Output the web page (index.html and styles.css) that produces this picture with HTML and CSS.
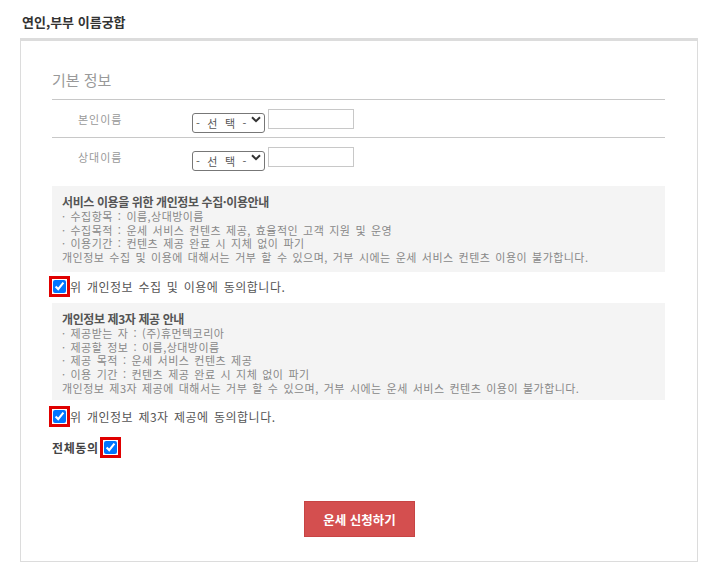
FILE: index.html
```html
<!DOCTYPE html>
<html lang="ko">
<head>
<meta charset="utf-8">
<title>연인,부부 이름궁합</title>
<link rel="stylesheet" href="styles.css">
</head>
<body>
<h1 class="page-title">연인,부부 이름궁합</h1>
<div class="panel">
  <div class="panel-inner">
    <h2 class="section-title">기본 정보</h2>
    <div class="form-row bordered">
      <span class="row-label">본인이름</span>
      <span class="select-wrap">
        <select class="sel"><option>- 선 택 -</option></select>
        <svg class="chev" width="10" height="7" viewBox="0 0 10 7"><path d="M1 1.2 L5 5.2 L9 1.2" fill="none" stroke="#333" stroke-width="2"/></svg>
      </span>
      <input class="name-input" type="text">
    </div>
    <div class="form-row">
      <span class="row-label">상대이름</span>
      <span class="select-wrap">
        <select class="sel"><option>- 선 택 -</option></select>
        <svg class="chev" width="10" height="7" viewBox="0 0 10 7"><path d="M1 1.2 L5 5.2 L9 1.2" fill="none" stroke="#333" stroke-width="2"/></svg>
      </span>
      <input class="name-input" type="text">
    </div>

    <div class="notice first">
      <p class="notice-title">서비스 이용을 위한 개인정보 수집·이용안내</p>
      <p class="notice-line">· 수집항목 : 이름,상대방이름</p>
      <p class="notice-line">· 수집목적 : 운세 서비스 컨텐츠 제공, 효율적인 고객 지원 및 운영</p>
      <p class="notice-line">· 이용기간 : 컨텐츠 제공 완료 시 지체 없이 파기</p>
      <p class="notice-line">개인정보 수집 및 이용에 대해서는 거부 할 수 있으며, 거부 시에는 운세 서비스 컨텐츠 이용이 불가합니다.</p>
    </div>
    <label class="agree-row">
      <span class="check-frame"><input type="checkbox" checked></span>
      <span class="agree-text">위 개인정보 수집 및 이용에 동의합니다.</span>
    </label>

    <div class="notice second">
      <p class="notice-title">개인정보 제3자 제공 안내</p>
      <p class="notice-line">· 제공받는 자 : (주)휴먼텍코리아</p>
      <p class="notice-line">· 제공할 정보 : 이름,상대방이름</p>
      <p class="notice-line">· 제공 목적 : 운세 서비스 컨텐츠 제공</p>
      <p class="notice-line">· 이용 기간 : 컨텐츠 제공 완료 시 지체 없이 파기</p>
      <p class="notice-line">개인정보 제3자 제공에 대해서는 거부 할 수 있으며, 거부 시에는 운세 서비스 컨텐츠 이용이 불가합니다.</p>
    </div>
    <label class="agree-row second-agree">
      <span class="check-frame"><input type="checkbox" checked></span>
      <span class="agree-text">위 개인정보 제3자 제공에 동의합니다.</span>
    </label>

    <label class="all-row">
      <span class="all-text">전체동의</span>
      <span class="check-frame"><input type="checkbox" checked></span>
    </label>

    <div class="btn-row">
      <button class="submit-btn" type="button">운세 신청하기</button>
    </div>
  </div>
</div>
</body>
</html>
```

FILE: styles.css
```css
* { box-sizing: border-box; }
html, body { margin: 0; padding: 0; background: #fff; }
body {
  font-family: "Noto Sans CJK KR", "Noto Sans", "Liberation Sans", sans-serif;
  color: #555;
  width: 716px;
}
.page-title {
  margin: 0;
  padding: 14px 0 0 22px;
  height: 38px;
  font-size: 13px;
  line-height: 16px;
  font-weight: 700;
  color: #333;
}
.panel {
  margin-left: 20px;
  width: 678px;
  height: 524px;
  border: 1px solid #dcdcdc;
  border-top: 3px solid #dcdcdc;
}
.panel-inner {
  padding: 29px 32px 0 31px;
}
.section-title {
  margin: 0;
  font-size: 15px;
  line-height: 20px;
  font-weight: 400;
  color: #999;
  padding-bottom: 9px;
  border-bottom: 1px solid #c8c8c8;
}
.form-row {
  display: flex;
  align-items: center;
  height: 38px;
}
.form-row.bordered { border-bottom: 1px solid #c8c8c8; }
.row-label {
  width: 140px;
  padding-left: 26px;
  font-size: 11px;
  letter-spacing: 1px;
  color: #999;
}
.select-wrap {
  position: relative;
  display: inline-block;
  width: 73px;
  height: 20px;
}
.sel {
  appearance: none;
  -webkit-appearance: none;
  width: 73px;
  height: 20px;
  margin: 0;
  padding: 0 0 0 3px;
  border: 1px solid #777;
  border-radius: 3px;
  background: #fff;
  font-family: inherit;
  font-size: 11px;
  letter-spacing: 2.2px;
  color: #555;
  line-height: 18px;
}
.chev {
  position: absolute;
  right: 4px;
  top: 7px;
  pointer-events: none;
}
.name-input {
  margin: 0 0 0 3px;
  width: 86px;
  height: 20px;
  border: 1px solid #c8c8c8;
  padding: 0 3px;
  font-size: 11px;
}
.notice {
  background: #f4f4f4;
  padding: 8px 10px 7px;
}
.notice.first { margin-top: 10px; }
.notice.second { margin-top: 6px; padding-bottom: 5px; }
.notice p { margin: 0; }
.notice-title {
  font-size: 12px;
  line-height: 16px;
  font-weight: 700;
  color: #555;
  letter-spacing: -0.4px;
}
.notice-line {
  font-size: 11px;
  line-height: 13.7px;
  color: #888;
  letter-spacing: 0.45px;
  word-spacing: 1.5px;
  white-space: nowrap;
}
.agree-row {
  display: flex;
  align-items: center;
  margin-top: 4px;
  height: 21px;
}
.agree-row.second-agree { margin-top: 6px; }
.check-frame {
  display: inline-flex;
  align-items: center;
  justify-content: center;
  width: 21px;
  height: 21px;
  border: 3px solid #e00000;
  margin-left: -3px;
}
.check-frame input {
  margin: 0;
  width: 13px;
  height: 13px;
}
.agree-text {
  margin-left: 0;
  font-size: 12px;
  letter-spacing: 0.5px;
  word-spacing: 1.5px;
  color: #555;
}
.all-row {
  display: flex;
  align-items: center;
  margin-top: 9px;
  height: 22px;
}
.all-text {
  font-size: 12px;
  letter-spacing: 0.6px;
  font-weight: 700;
  color: #444;
}
.all-row .check-frame { margin-left: 1px; }
.btn-row {
  display: flex;
  justify-content: center;
  margin-top: 43px;
}
.submit-btn {
  width: 111px;
  height: 36px;
  margin-left: 2px;
  background: #d44f4f;
  border: 1px solid #c74444;
  color: #fff;
  font-family: inherit;
  font-size: 12.5px;
  font-weight: 700;
}
```
